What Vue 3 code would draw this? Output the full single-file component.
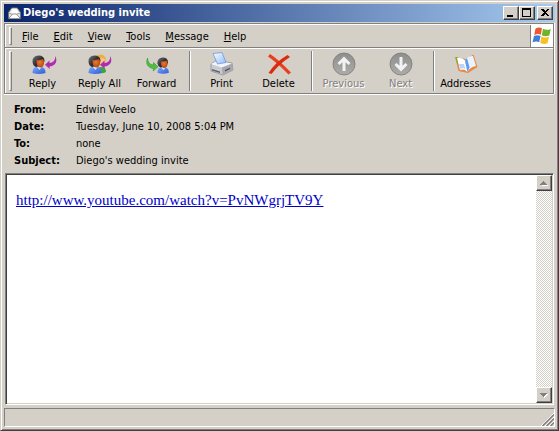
<script setup>
const menus = ['File', 'Edit', 'View', 'Tools', 'Message', 'Help']

const groups = [
  [
    { id: 'reply', label: 'Reply' },
    { id: 'replyAll', label: 'Reply All' },
    { id: 'forward', label: 'Forward' },
  ],
  [
    { id: 'print', label: 'Print' },
    { id: 'delete', label: 'Delete' },
  ],
  [
    { id: 'previous', label: 'Previous', disabled: true },
    { id: 'next', label: 'Next', disabled: true },
  ],
  [{ id: 'addresses', label: 'Addresses' }],
]

const headers = [
  ['From:', 'Edwin Veelo'],
  ['Date:', 'Tuesday, June 10, 2008 5:04 PM'],
  ['To:', 'none'],
  ['Subject:', "Diego's wedding invite"],
]
</script>

<template>
  <div class="window">
    <svg class="defs" width="0" height="0" aria-hidden="true">
      <defs>
        <linearGradient id="hair" x1="0" y1="0" x2="1" y2="1">
          <stop offset="0" stop-color="#77777b" />
          <stop offset="0.5" stop-color="#303034" />
          <stop offset="1" stop-color="#18181c" />
        </linearGradient>
        <radialGradient id="face" cx="0.45" cy="0.4" r="0.7">
          <stop offset="0" stop-color="#ee7a30" />
          <stop offset="1" stop-color="#a83c0a" />
        </radialGradient>
        <linearGradient id="shirt" x1="0" y1="0" x2="1" y2="1">
          <stop offset="0" stop-color="#7fa8f8" />
          <stop offset="1" stop-color="#2c5cd8" />
        </linearGradient>
        <linearGradient id="disc" x1="0" y1="0" x2="0" y2="1">
          <stop offset="0" stop-color="#8e8e8c" />
          <stop offset="1" stop-color="#acacaa" />
        </linearGradient>
        <linearGradient id="sheet" x1="0" y1="0" x2="1" y2="1">
          <stop offset="0" stop-color="#ffffff" />
          <stop offset="1" stop-color="#8fbcf6" />
        </linearGradient>
        <g id="person">
          <path d="M0.5 18 Q0.5 12.5 4 12 H9 Q13.5 12.5 13.5 18 Q7 20 0.5 18Z" fill="url(#shirt)" />
          <path d="M5 12 L7.5 15 L9.5 12Z" fill="#dce8ff" />
          <path d="M0.5 7 Q0 1 6.5 0.5 Q12.5 0.5 12.5 6 L11 10 L4 12 Q1 11 0.5 7Z" fill="url(#hair)" />
          <path d="M4.5 5 Q8 5.5 11 4 Q12.5 5 12 8 Q11.500 12.500 8 12.500 Q4 12 4.500 5Z" fill="url(#face)" />
        </g>
        <path id="swoosh" d="M10.500 0 Q13 6.500 8 9.500 Q6.500 10.300 4.500 10.500 L4.800 13 L0 8.800 L4.500 4.500 L4.500 7 Q10 7 10.500 0Z" />
      </defs>
    </svg>

    <header class="titlebar">
      <svg class="app-icon" viewBox="0 0 14 14" aria-hidden="true">
        <path d="M0.500 6 L4 1 H10 L13.500 6 V12.500 H0.500Z" fill="#e8e8e2" stroke="#6c7074" />
        <path d="M3 6 L5 2 H9 L11 6 L7 8Z" fill="#fff" />
        <path d="M1 12 L5 7.500 H9 L13 12" fill="#fff" stroke="#888a88" />
        <path d="M1 6.500 L5 8 M13 6.500 L9 8" stroke="#a0a09c" />
      </svg>
      <h1>Diego's wedding invite</h1>
      <div class="controls">
        <button type="button" aria-label="Minimize">
          <svg viewBox="0 0 12 10"><path d="M2 7H8V9H2Z" /></svg>
        </button>
        <button type="button" aria-label="Maximize">
          <svg viewBox="0 0 12 10"><path fill-rule="evenodd" d="M1 0H10V9H1ZM2 2V8H9V2Z" /></svg>
        </button>
        <button type="button" class="close" aria-label="Close">
          <svg viewBox="0 0 12 10"><path d="M2 1H4L6 3L8 1H10L7 4.500L10 8H8L6 6L4 8H2L5 4.500Z" /></svg>
        </button>
      </div>
    </header>

    <div class="bars">
      <div class="menu-row">
        <span class="grip"></span>
        <nav class="menus">
          <button v-for="m in menus" :key="m" type="button"><u>{{ m[0] }}</u>{{ m.slice(1) }}</button>
        </nav>
        <div class="brand">
          <svg viewBox="0 0 20 20" aria-hidden="true">
            <path d="M3.500 2.500 Q7 0.500 10 2.300 L8.800 8.800 Q6 7.200 2.200 9Z" fill="#ec5a2c" />
            <path d="M11 2.800 Q14.500 4.800 18.800 3 L17.300 9.500 Q13.500 11 9.800 9.300Z" fill="#6cb52c" />
            <path d="M2 10 Q5.500 8.300 8.600 10 L7.200 16.300 Q4.500 14.600 0.500 16.300Z" fill="#3c7edc" />
            <path d="M9.500 10.500 Q13 12.300 17 10.700 L15.500 17.300 Q12 19 8.200 16.900Z" fill="#f8c024" />
          </svg>
        </div>
      </div>

      <div class="tool-row">
        <span class="grip"></span>
        <div class="tools">
          <div v-for="(group, i) in groups" :key="i" class="group">
            <button v-for="t in group" :key="t.id" type="button" :disabled="t.disabled">
              <svg viewBox="0 0 28 24" aria-hidden="true">
                <template v-if="t.id === 'reply'">
                  <use href="#person" x="3" y="3" />
                  <use href="#swoosh" x="16" y="4" fill="#b02cae" />
                </template>
                <template v-else-if="t.id === 'replyAll'">
                  <path d="M11 21 Q10 15 15 15 Q20 15 20 20 Q17 22 11 21Z" fill="#3aa63c" />
                  <circle cx="14.500" cy="8" r="5.500" fill="#f2ae3c" />
                  <circle cx="15.500" cy="10" r="4" fill="#f7c58a" />
                  <use href="#person" x="2" y="3" />
                  <use href="#swoosh" x="14" y="4" fill="#b02cae" />
                </template>
                <template v-else-if="t.id === 'forward'">
                  <g transform="translate(14 5) scale(0.88)"><use href="#person" /></g>
                  <g transform="translate(15 6) scale(-1 1)"><use href="#swoosh" fill="#4cc040" stroke="#288a24" stroke-width="0.500" /></g>
                </template>
                <template v-else-if="t.id === 'print'">
                  <path d="M3 12 L9 8 L24 11 L25 18 L15 23 L3 19Z" fill="#c9cbd0" stroke="#85878e" stroke-width="0.700" />
                  <path d="M3 12 L9 9 L24 11.500 L14 15.500Z" fill="#f3f4f7" />
                  <path d="M14 15.500 L24.500 11.500 V18 L14.500 22.500Z" fill="#a6a8ae" />
                  <path d="M5 1.500 L14 0.500 L18 10.500 L9.500 12Z" fill="url(#sheet)" stroke="#6d97dc" stroke-width="0.800" />
                  <path d="M4 17 L12 19.500 V21 L4 18.500Z" fill="#5e6068" />
                  <path d="M17 18 L22 15.700 V17 L17 19.500Z" fill="#4c4e54" />
                </template>
                <template v-else-if="t.id === 'delete'">
                  <path d="M5 2 Q13 7 26 20.500 L23.500 22.500 Q13 11.500 3 4.500Z" fill="#e8401c" />
                  <path d="M22.500 3 L25 5 Q14 12 6.500 22 L3.500 21 Q11 9.500 22.500 3Z" fill="#d92c10" />
                </template>
                <template v-else-if="t.disabled">
                  <circle cx="14" cy="12" r="11" fill="url(#disc)" stroke="#787876" stroke-width="0.800" />
                  <path v-if="t.id === 'previous'" d="M14 4.500 L20.500 11 L18.500 13 L15.500 10.200 V19 H12.500 V10.200 L9.500 13 L7.500 11Z" fill="#f2f2f0" />
                  <path v-else d="M14 19.500 L20.500 13 L18.500 11 L15.500 13.800 V5 H12.500 V13.800 L9.500 11 L7.500 13Z" fill="#f2f2f0" />
                </template>
                <template v-else>
                  <path d="M3 5 L6.500 19 L16 21 L25.500 15 L21.500 2.500 L14 7Z" fill="#ec8742" />
                  <path d="M3.500 5.500 L5 11 L8 13 L6 5Z" fill="#6fb43a" />
                  <path d="M5 6 Q10 5 13 8.500 L15.500 20 Q12 16.500 8 18Z" fill="#fff" />
                  <path d="M13 8.500 Q15 4 21 4 L24 14 Q18 15 15.500 20Z" fill="#e9f2ff" />
                  <path d="M13 8.500 L15.500 20 L17.500 15.500 L15 6Z" fill="#5c9cec" />
                  <path d="M7 12 L12 12 L13.500 17 Q11 15.500 8 17Z" fill="#b7d5fa" />
                </template>
              </svg>
              <span>{{ t.label }}</span>
            </button>
          </div>
        </div>
      </div>
    </div>

    <dl class="headers">
      <template v-for="[name, value] in headers" :key="name">
        <dt>{{ name }}</dt>
        <dd>{{ value }}</dd>
      </template>
    </dl>

    <main class="message">
      <div class="body">
        <a href="http://www.youtube.com/watch?v=PvNWgrjTV9Y">http://www.youtube.com/watch?v=PvNWgrjTV9Y</a>
      </div>
      <div class="scrollbar">
        <button type="button" aria-label="Scroll up">
          <svg viewBox="0 0 12 12"><path d="M10 9H3L6.500 5.500Z" fill="#fff" /><path d="M9 8H2L5.500 4Z" fill="#808080" /></svg>
        </button>
        <button type="button" aria-label="Scroll down">
          <svg viewBox="0 0 12 12"><path d="M10 5H3L6.500 9Z" fill="#fff" /><path d="M9 4H2L5.500 8Z" fill="#808080" /></svg>
        </button>
      </div>
    </main>

    <footer class="status">
      <svg viewBox="0 0 13 13" aria-hidden="true">
        <path d="M0 13L13 0M4 13L13 4M8 13L13 8" stroke="#fff" />
        <path d="M1.500 13L13 1.500M5.500 13L13 5.500M9.500 13L13 9.500" stroke="#808080" stroke-width="1.500" />
      </svg>
    </footer>
  </div>
</template>

<style>
body {
  margin: 0;
}
</style>

<style scoped>
.window {
  box-sizing: border-box;
  display: flex;
  flex-direction: column;
  min-height: 100vh;
  padding: 2px;
  background: #d4d0c8;
  border: 1px solid;
  border-color: #d4d0c8 #404040 #404040 #d4d0c8;
  box-shadow: inset 1px 1px #fff, inset -1px -1px #808080;
  color: #000;
  font: 11px/13px Tahoma, "DejaVu Sans Condensed", "DejaVu Sans", sans-serif;
}

.defs {
  position: absolute;
}

button {
  margin: 0;
  padding: 0;
  border: 0;
  background: none;
  color: inherit;
  font: inherit;
}

.titlebar {
  display: flex;
  align-items: center;
  height: 18px;
  margin: 1px 1px 0;
  padding: 0 2px 0 4px;
  background: linear-gradient(90deg, #0a246a, #a6caf0);
}

.app-icon {
  width: 13px;
  height: 13px;
}

h1 {
  flex: 1;
  margin: 0 0 0 2px;
  color: #fff;
  font-size: 11px;
  line-height: 14px;
}

.controls {
  display: flex;
}

.controls button,
.scrollbar button {
  box-sizing: border-box;
  background: #d4d0c8;
  border: 1px solid;
  border-color: #fff #404040 #404040 #fff;
  box-shadow: inset -1px -1px #808080;
}

.controls button {
  width: 16px;
  height: 14px;
}

.controls .close {
  margin-left: 2px;
}

.controls svg {
  display: block;
  width: 12px;
  height: 10px;
  margin: 1px;
  shape-rendering: crispEdges;
}

.bars {
  margin: 1px 2px 0 1px;
  border: 1px solid #808080;
  box-shadow: inset 1px 1px #fff, 0 1px #fff, 1px 0 #fff;
}

.menu-row,
.tool-row {
  display: flex;
}

.menu-row {
  height: 23px;
  border-bottom: 1px solid #808080;
}

.tool-row {
  height: 45px;
  box-shadow: inset 0 1px #fff;
}

.grip {
  width: 1px;
  margin: 3px 0 2px 4px;
  border: 1px solid;
  border-color: #fff #808080 #808080 #fff;
}

.menus {
  display: flex;
  flex: 1;
  gap: 15px;
  padding: 2px 0 0 10px;
}

.brand {
  display: flex;
  align-items: center;
  justify-content: center;
  width: 22px;
  margin-top: 1px;
  background: #fff;
  border-left: 1px solid #808080;
}

.brand svg {
  width: 20px;
  height: 20px;
}

.tools {
  display: flex;
  padding-left: 2px;
}

.group {
  display: flex;
}

.group + .group::before {
  content: "";
  width: 1px;
  margin: 3px 2px 2px 4px;
  background: #808080;
  border-right: 1px solid #fff;
}

.group button {
  display: flex;
  flex-direction: column;
  align-items: center;
  gap: 1px;
  width: 57px;
  padding-top: 4px;
  white-space: nowrap;
}

.group svg {
  width: 28px;
  height: 24px;
}

.group button:disabled {
  color: #808080;
  text-shadow: 1px 1px #fff;
}

.headers {
  display: grid;
  grid-template-columns: 62px 1fr;
  margin: 7px 11px 4px;
  line-height: 17px;
}

dt {
  font-weight: bold;
}

dd {
  margin: 0;
}

.message {
  display: flex;
  flex: 1;
  margin: 0 2px;
  background: #fff;
  border: 1px solid;
  border-color: #808080 #fff #fff #808080;
  box-shadow: inset 1px 1px #404040, inset -1px -1px #d4d0c8;
}

.body {
  flex: 1;
  padding: 16px 10px;
  font: 15px/20px "Liberation Serif", "Times New Roman", serif;
}

a {
  color: #0000c8;
}

.scrollbar {
  display: flex;
  flex-direction: column;
  justify-content: space-between;
  width: 16px;
  margin: 1px;
  background: repeating-conic-gradient(#d4d0c8 0 25%, #fff 0 50%) 0 0 / 2px 2px;
}

.scrollbar button {
  width: 16px;
  height: 16px;
}

.scrollbar svg {
  display: block;
  width: 12px;
  height: 12px;
  margin: 1px;
  shape-rendering: crispEdges;
}

.status {
  display: flex;
  align-items: flex-end;
  justify-content: flex-end;
  height: 17px;
  margin: 3px 1px 1px;
  border: 1px solid;
  border-color: #808080 #fff #fff #808080;
}

.status svg {
  width: 13px;
  height: 13px;
}
</style>
